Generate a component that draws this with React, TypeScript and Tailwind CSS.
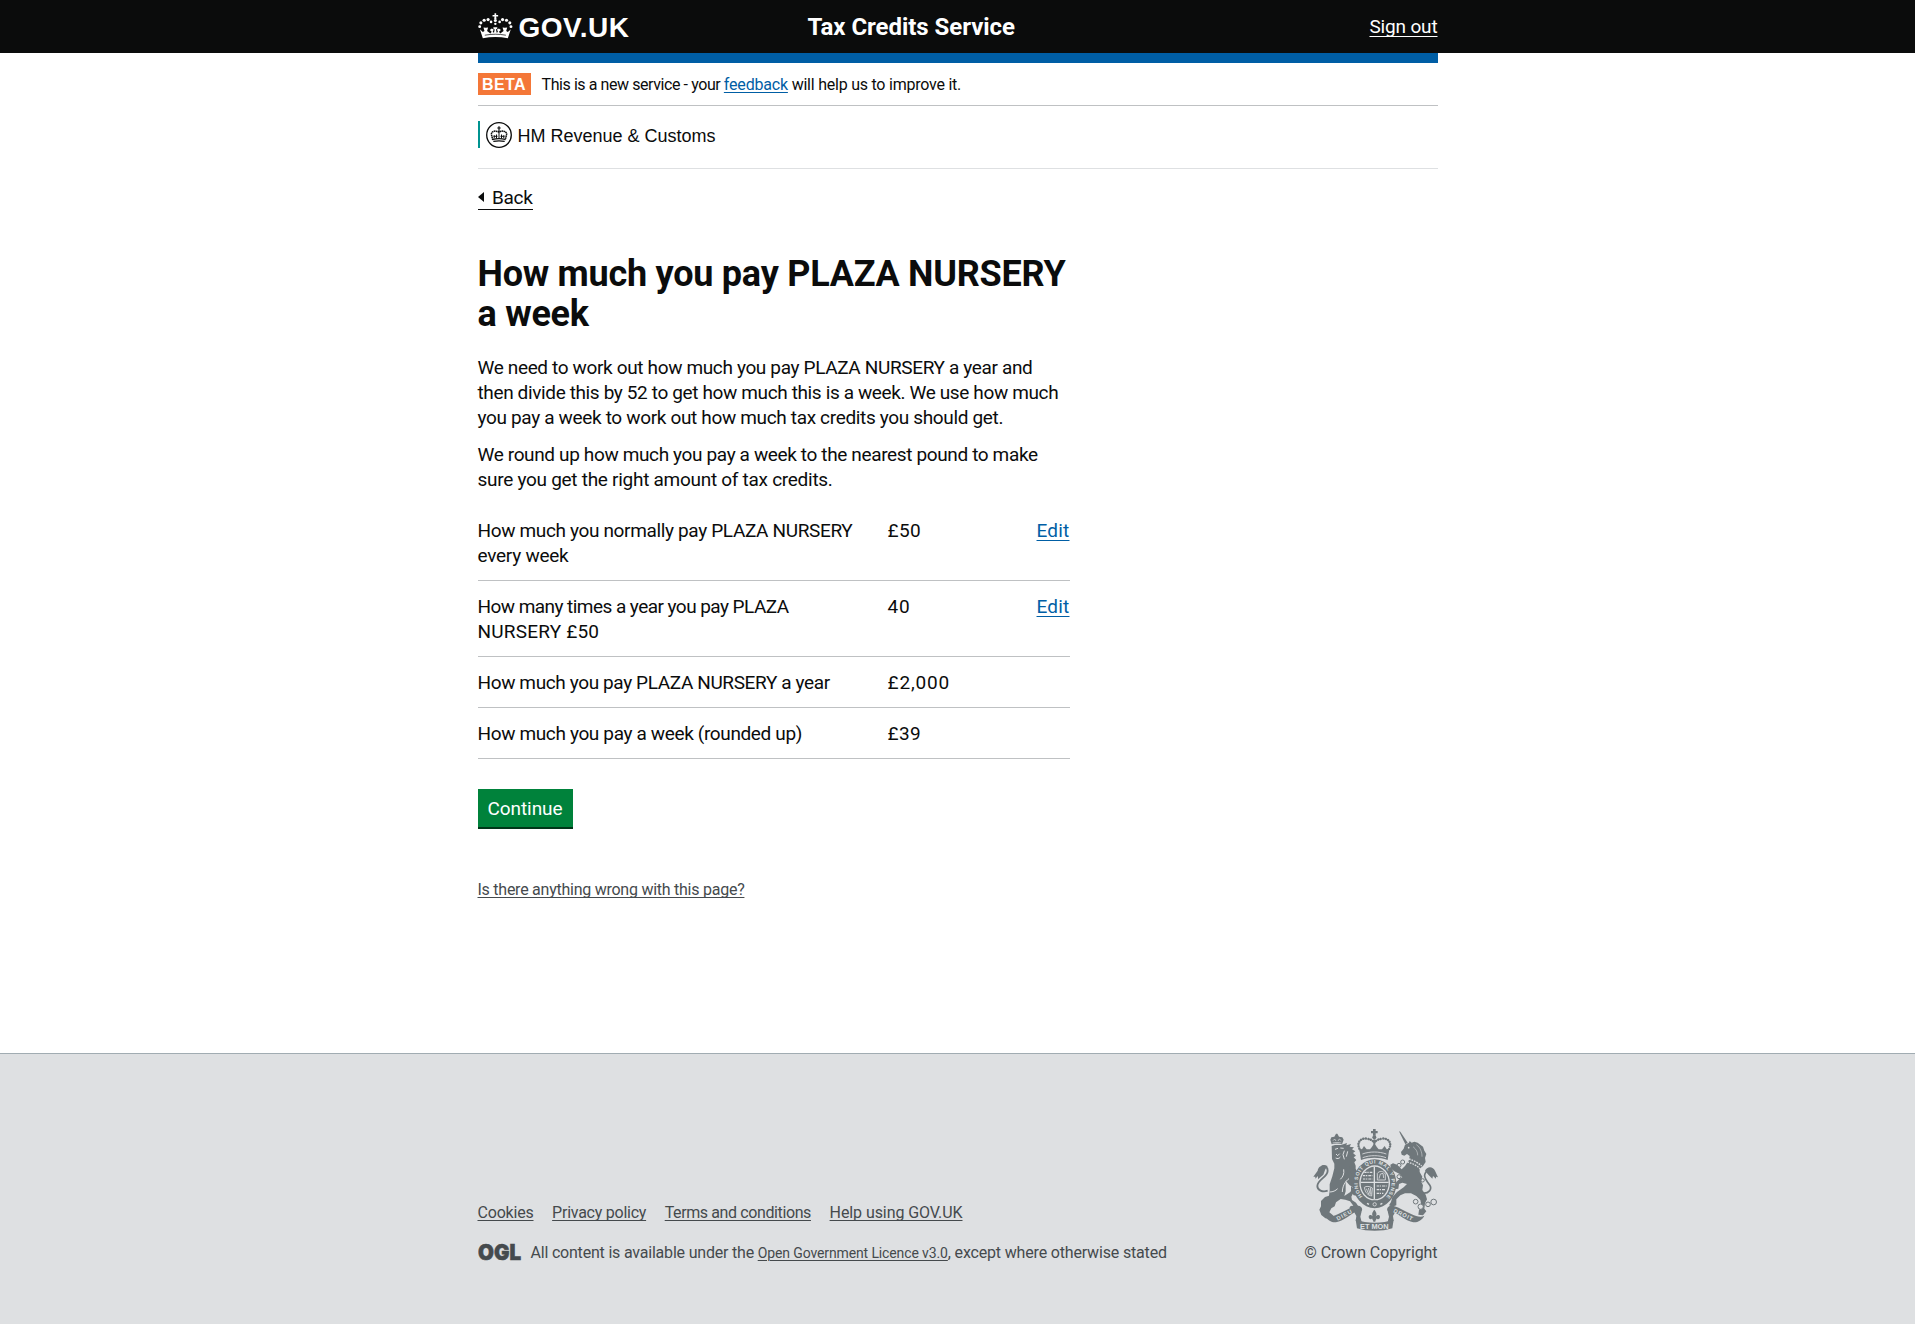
import type { ReactNode } from "react";

const C = "#6f777b";
const BG = "#dee0e2";

function CrownMark() {
  return (
    <svg className="mt-[-1px] h-[26px] w-[35px]" viewBox="24 38 105 79" fill="#ffffff" aria-hidden="true">
      <path d="M73.5 39h5v5h6v5h-6l1 8h-7l1-8h-6v-5h6z" />
      <circle cx="76" cy="61" r="4.6" />
      <circle cx="76" cy="71" r="3.6" />
      <circle cx="63" cy="65" r="4" />
      <circle cx="89" cy="65" r="4" />
      <circle cx="54" cy="58" r="4.8" />
      <circle cx="98" cy="58" r="4.8" />
      <circle cx="42" cy="60" r="4.8" />
      <circle cx="110" cy="60" r="4.8" />
      <circle cx="32" cy="68" r="4.6" />
      <circle cx="120" cy="68" r="4.6" />
      <circle cx="28.500" cy="79.500" r="4.400" />
      <circle cx="123.500" cy="79.500" r="4.400" />
      <path d="M38 115L29 87l9 9 5-3-3-11 7 1 7-1-3 11 10 7 4-5-6-5 6-5 6 3-3 8 4 2 2-10-4-3v-4h12v4l-4 3 2 10 4-2-3-8 6-3 6 5-6 5 4 5 10-7-3-11 7 1 7-1-3 11 5 3 9-9-9 28c-25-5-51-5-76 0z" />
      <path d="M44 105.500c21-4 43-4 64 0" fill="none" stroke="#0b0c0c" strokeWidth="2.200" />
    </svg>
  );
}

function HmrcMark() {
  return (
    <svg className="h-[26px] w-[26px]" viewBox="0 0 26 26" fill="none" stroke="#0b0c0c" aria-hidden="true">
      <circle cx="13" cy="13" r="12.3" strokeWidth="1.3" />
      <path d="M13 4.300v4.700M11.300 6h3.400" strokeWidth="1.200" />
      <path d="M6.800 18L5.400 12.400C5 9 10.300 8.200 13 10.200c2.700-2 8-1.200 7.600 2.200L19.200 18" strokeWidth="1.500" strokeDasharray="1.600 .4" />
      <path d="M13 10.200v6M8.200 13.200v3M10.500 12.500v4M15.500 12.500v4M17.800 13.200v3M7.500 14.300h4M14.500 14.300h4" strokeWidth="1" />
      <path d="M6.800 17.300c4.200-.9 8.200-.9 12.400 0M7.300 19.400c4-.7 7.400-.7 11.400 0" strokeWidth="1.200" />
    </svg>
  );
}

function CrestArms() {
  return (
    <svg className="h-[102px] w-[125px]" viewBox="68 57 375 306" fill={C} aria-hidden="true">
      {/* lion crown */}
      <path d="M124 103l-4-14 3-7 9-2 5-9h4l5 9 10 2 4 7-5 14c-10-3-21-3-31 0z" />
      <path d="M128 92l5-5 4 6M143 93l4-6 6 5M127 99c9-2 17-2 26 0" fill="none" stroke={BG} strokeWidth="2" />
      {/* lion head, mane and body */}
      <path d="M124 108l10-3 18 0 18-6-2 7 14-4-4 8 13 2-6 6 10 6-7 5 9 8-7 5 8 8-6 7 4 10 0 9 6 14 0 12-4 16 8 14-3 10-6 8-8-2-6 12 2 10 12 8 8 12-2 8-18 2-8-6 4-6 8-1-10-13-14-5-14-2-14 10-4 12-10 6-6 12 10 8 8 8-8 5-22-3-12-10-6-16 5-10 0-16 12-12 12-4 2-16 0-18 8-24 6-24 0-14-7-14z" />
      <path d="M134 118l9-3M150 114l10 1M137 132l5 5 6-6M136 144c5 3 10 2 14-3M162 122l-4 12 4 14M172 124l-4 16M150 208c8-8 12-16 10-30M176 206c-12 8-20 24-20 40M118 246c10 0 18-4 24-10" fill="none" stroke={BG} strokeWidth="3" />
      <path d="M166 212l12 14 10 6-8 14-18 12 4-14z" fill={BG} />
      <path d="M176 170l12 10 16 10 2 12-12 4-10-10zM182 228l16 16 8 4-2 10-14-2-8-12z" />
      {/* lion tail */}
      <path d="M112 242c-16 6-31-2-31-14 0-20 31-26 31-46 0-12-10-18-18-12" fill="none" stroke={C} strokeWidth="5.5" />
      <path d="M112 168c-16-6-28 2-30 14l-13 18 6 0 0 6 8-8 0 10 16-14 6-16z" />
      {/* royal crown */}
      <path d="M248 57h8v6h6v7h-6v7h-8v-7h-6v-7h6z" />
      <circle cx="252" cy="82" r="6" />
      <path d="M216 128l-8-10c-10-20 2-34 20-32 12 1 20 6 24 12 4-6 12-11 24-12 18-2 30 12 20 32l-8 10" fill="none" stroke={C} strokeWidth="7.5" strokeDasharray="0.1 7.3" strokeLinecap="round" />
      <path d="M252 88v30" stroke={C} strokeWidth="5" />
      <path d="M212 150l-5-34 8 2 6-10 8 10 10 0 5-6 8-12 8 12 5 6 10 0 8-10 6 10 8-2-5 34c-24-9-56-9-80 0z" />
      <path d="M216 132c22-8 50-8 72 0M217 143c22-8 48-8 70 0" fill="none" stroke={BG} strokeWidth="2.5" />
      {/* garter and shield */}
      <ellipse cx="253" cy="221" rx="65" ry="73" />
      <ellipse cx="253" cy="219" rx="46" ry="53" fill={BG} />
      <ellipse cx="253" cy="219" rx="42" ry="49" />
      <path d="M252 170v98M211 217h84" stroke={BG} strokeWidth="4" />
      <path d="M222 187h24M218 197h28M218 207h28M259 228h30M259 239h27M259 250h20" stroke={BG} strokeWidth="3.5" strokeDasharray="7 2 4 3 9 2" />
      <path d="M261 210v-20c6-8 18-8 24 2v18zM266 206l4-14 8-2 2 14M222 232c3 16 10 24 22 26l2-24c-9-6-18-6-24-2zM228 236l8 18M234 234l6 20M240 233l2 20" fill="none" stroke={BG} strokeWidth="2.5" />
      <path id="garter" d="M218 261A51 58 0 1 1 288 261" fill="none" />
      <text fill={BG} fontFamily="Liberation Sans, sans-serif" fontSize="15" fontWeight="700">
        <textPath href="#garter" startOffset="2" textLength="262">HONI SOIT QUI MAL Y PENSE</textPath>
      </text>
      <circle cx="253" cy="283" r="12" />
      <circle cx="253" cy="283" r="5" fill="none" stroke={BG} strokeWidth="2.5" />
      <path d="M230 280l6 3M270 283l6-3" stroke={BG} strokeWidth="4" />
      {/* unicorn */}
      <path d="M326 64l4 1 22 33-7 5z" />
      <path d="M344 104L356 98 358 93 364 98 372 95 382 98 390 104 398 110 402 122 408 132 404 144 406 156 398 168 388 176 388 186 396 200 392 214 398 226 396 240 406 254 410 268 404 280 402 296 408 304 398 316 384 314 386 300 394 290 390 270 378 258 362 250 344 250 330 256 318 268 318 286 306 290 296 286 302 276 306 262 320 246 340 232 350 222 336 218 326 222 324 236 314 238 312 230 318 216 328 206 336 202 328 192 312 184 302 176 300 164 308 160 320 164 334 178 344 168 356 150 358 138 350 132 342 137 334 134 332 126 340 116z" />
      <circle cx="355" cy="113" r="2.5" fill={BG} />
      <path d="M351 156c14 4 28 10 38 20M356 147c14 4 28 12 38 21" fill="none" stroke={BG} strokeWidth="4" strokeDasharray="5 3" />
      <path d="M378 104c12 8 17 22 17 36M368 110c10 8 14 16 14 26" fill="none" stroke={BG} strokeWidth="1.5" />
      {/* unicorn tail */}
      <path d="M396 249c20 3 30-12 22-24-8-12-20-22-14-34 5-12 17-16 25-9" fill="none" stroke={C} strokeWidth="5" />
      <path d="M404 182c6-14 24-14 30 0l9 20-6-2 0 6-9-8-2 8-12-12z" />
      <g fill="none" stroke={C} strokeWidth="3">
        <circle cx="337" cy="156" r="6" />
        <circle cx="326" cy="166" r="6" />
        <circle cx="326" cy="200" r="6" />
        <circle cx="376" cy="275" r="7" />
        <circle cx="391" cy="290" r="8" fill={BG} />
        <circle cx="413" cy="283" r="7" fill={BG} />
        <circle cx="430" cy="276" r="8.5" />
        <circle cx="397" cy="211" r="5" fill={BG} />
      </g>
      {/* motto scroll */}
      <path d="M104 317c10 6 24 2 38-4 20-9 36-20 54-25 12-3 22 4 19 14l-14 6-2-4c-18 8-40 30-62 33-14 1-27-8-33-20z" />
      <path d="M402 317c-10 6-24 2-38-4-20-9-36-20-54-25-12-3-22 4-19 14l14 6 2-4c18 8 40 30 62 33 14 1 27-8 33-20z" />
      <path d="M188 300l14-6 12 10-4 16 4 16-18-4 2-14zM318 300l-14-6-12 10 4 16-4 16 18-4-2-14z" />
      <path d="M196 329c34 12 80 12 114 0l-4 26c-30 10-76 10-106 0z" />
      <text x="209" y="356" fill={BG} fontFamily="Liberation Sans, sans-serif" fontSize="19" fontWeight="700" textLength="86" lengthAdjust="spacingAndGlyphs">ET MON</text>
      <text transform="translate(142 332) rotate(-28)" fill={BG} fontFamily="Liberation Sans, sans-serif" fontSize="17" fontWeight="700" textLength="50">DIEU</text>
      <text transform="translate(308 306) rotate(25)" fill={BG} fontFamily="Liberation Sans, sans-serif" fontSize="17" fontWeight="700" textLength="62">DROIT</text>
      <path d="M252 299c8 9 8 16 3 22 8-10 17-6 13 4-3 5-8 3-9 0-1 5-4 6-4 10h-6c0-4-3-5-4-10-1 3-6 5-9 0-4-10 5-14 13-4-5-6-5-13 3-22z" />
    </svg>
  );
}

function Row({ label, value, valueClass, edit }: { label: ReactNode; value: string; valueClass: string; edit?: boolean }) {
  return (
    <div className="flex whitespace-nowrap border-b border-[#bfc1c3] pt-[13px] pb-3">
      <dt className="w-[410px]">{label}</dt>
      <dd className={valueClass}>{value}</dd>
      {edit && (
        <dd className="ml-auto tracking-[0.2px]">
          <a href="#" className="text-[#005ea5] underline decoration-1 underline-offset-[3px] [text-decoration-skip-ink:none]">Edit</a>
        </dd>
      )}
    </div>
  );
}

export default function App() {
  return (
    <div className="flex min-h-[1324px] flex-col bg-white font-[Roboto,sans-serif] text-[#0b0c0c]">
      <header className="h-[53px] bg-[#0b0c0c] text-white">
        <div className="mx-auto flex h-full w-[960px] items-center">
          <a href="#" className="flex w-[330px] items-center">
            <CrownMark />
            <span className="ml-[6px] pt-[3px] font-['Liberation_Sans',sans-serif] text-[28px] leading-[30px] font-bold tracking-[0.5px]">GOV.UK</span>
          </a>
          <span className="text-2xl leading-[30px] font-bold tracking-[-0.05px]">Tax Credits Service</span>
          <a href="#" className="ml-auto text-[19px] leading-[25px] tracking-[-0.16px] underline decoration-1 underline-offset-[3px] [text-decoration-skip-ink:none]">Sign out</a>
        </div>
      </header>

      <main className="mx-auto w-[960px] flex-1">
        <div className="h-[10px] bg-[#005ea5]" />
        <div className="flex h-[43px] items-center border-b border-[#bfc1c3]">
          <strong className="h-[22px] w-[53px] bg-[#f47738] pl-[4.5px] font-['Liberation_Sans',sans-serif] text-base leading-[23px] tracking-[0.4px] text-white">BETA</strong>
          <p className="ml-[11px] pt-[2px] text-base leading-5 whitespace-pre">
            <span className="tracking-[-0.42px]">This is a new service - your </span>
            <a href="#" className="tracking-[-0.19px] text-[#005ea5] underline decoration-1 underline-offset-2">feedback</a>
            <span className="tracking-[-0.23px]"> will help us to improve it.</span>
          </p>
        </div>
        <div className="flex h-[63px] items-start border-b border-[#dee0e2] pt-[15px]">
          <div className="flex h-[27px] items-center border-l-2 border-[#009390] pl-[6px]">
            <HmrcMark />
            <span className="ml-[6px] pt-[2px] font-['Liberation_Sans',sans-serif] text-lg leading-6">HM Revenue &amp; Customs</span>
          </div>
        </div>

        <a href="#" className="mt-4 flex h-[25px] w-[55px] items-center border-b border-[#0b0c0c] text-[19px] leading-[25px] tracking-[-0.3px]">
          <span className="mt-[-1px] mr-[8.5px] h-0 w-0 border-y-[5px] border-r-[6px] border-y-transparent border-r-[#0b0c0c]" />
          Back
        </a>

        <div className="w-[592px] text-[19px] leading-[25px]">
          <h1 className="mt-[44px] text-4xl leading-10 font-bold whitespace-nowrap tracking-[-0.25px]">
            How much you pay PLAZA NURSERY<br />a week
          </h1>
          <p className="mt-[21px] whitespace-nowrap tracking-[-0.355px]">
            We need to work out how much you pay PLAZA NURSERY a year and<br />
            <span className="tracking-[-0.37px]">then divide this by 52 to get how much this is a week. We use how much</span><br />
            <span className="tracking-[-0.34px]">you pay a week to work out how much tax credits you should get.</span>
          </p>
          <p className="mt-3 whitespace-nowrap tracking-[-0.365px]">
            We round up how much you pay a week to the nearest pound to make<br />
            <span className="tracking-[-0.28px]">sure you get the right amount of tax credits.</span>
          </p>
          <dl className="mt-[13px]">
            <Row
              label={<><span className="tracking-[-0.35px]">How much you normally pay PLAZA NURSERY</span><br /><span className="tracking-[-0.25px]">every week</span></>}
              value="£50" valueClass="tracking-[0.37px]" edit
            />
            <Row
              label={<><span className="tracking-[-0.55px]">How many times a year you pay PLAZA</span><br /><span className="tracking-[0.2px]">NURSERY £50</span></>}
              value="40" valueClass="tracking-[0.8px]" edit
            />
            <Row label={<span className="tracking-[-0.38px]">How much you pay PLAZA NURSERY a year</span>} value="£2,000" valueClass="tracking-[0.85px]" />
            <Row label={<span className="tracking-[-0.36px]">How much you pay a week (rounded up)</span>} value="£39" valueClass="tracking-[0.37px]" />
          </dl>
          <button className="mt-[30px] block h-10 w-[95px] border-b-2 border-[#003618] bg-[#00823b] pt-[2px] leading-[36px] tracking-[-0.07px] text-white">
            Continue
          </button>
        </div>
        <a href="#" className="mt-[51px] block w-fit text-base leading-5 tracking-[-0.25px] text-[#454a4d] underline decoration-1 underline-offset-2 [text-decoration-skip-ink:none]">
          Is there anything wrong with this page?
        </a>
      </main>

      <footer className="h-[271px] border-t border-[#a1acb2] bg-[#dee0e2] text-base leading-5 text-[#454a4d]">
        <div className="mx-auto flex w-[960px] justify-between pt-[75px]">
          <div className="pt-[74px] whitespace-nowrap">
            <nav className="flex gap-[18.6px] decoration-1 underline-offset-2 [text-decoration-skip-ink:none]">
              <a href="#" className="tracking-[-0.2px] underline">Cookies</a>
              <a href="#" className="tracking-[-0.25px] underline">Privacy policy</a>
              <a href="#" className="tracking-[-0.39px] underline">Terms and conditions</a>
              <a href="#" className="tracking-[-0.08px] underline">Help using GOV.UK</a>
            </nav>
            <div className="mt-5 flex h-5 items-center">
              <svg className="mt-[-3px] h-[26px] w-[46px]" viewBox="0 0 46 26" aria-label="OGL">
                <text x="0" y="21" fill="#454a4d" stroke="#454a4d" strokeWidth="0.6" fontFamily="Inter, sans-serif" fontWeight="900" fontSize="22" textLength="43" lengthAdjust="spacingAndGlyphs">OGL</text>
              </svg>
              <p className="ml-[7px] whitespace-pre">
                <span className="tracking-[-0.2px]">All content is available under the </span>
                <a href="#" className="text-sm leading-5 tracking-[-0.12px] underline decoration-1 underline-offset-2">Open Government Licence v3.0</a>
                <span className="tracking-[-0.17px]">, except where otherwise stated</span>
              </p>
            </div>
          </div>
          <div className="flex flex-col items-end">
            <CrestArms />
            <a href="#" className="mt-3 tracking-[-0.08px]">© Crown Copyright</a>
          </div>
        </div>
      </footer>
    </div>
  );
}
